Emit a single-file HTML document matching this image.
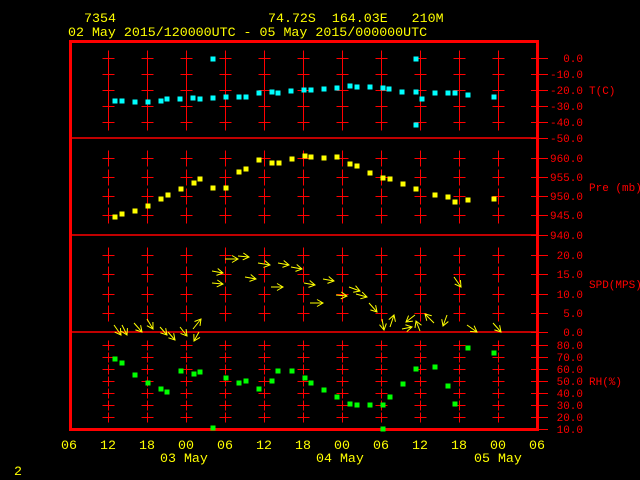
<!DOCTYPE html>
<html><head><meta charset="utf-8"><style>
html,body{margin:0;padding:0;background:#000;}
svg{display:block;}
text{font-family:"Liberation Mono",monospace;font-size:13.3px;white-space:pre;}
.y{fill:#ffff00}.r{fill:#ff0000}
.r text,text.r{font-size:11px;}
</style></head><body>
<svg id="s" width="640" height="480" viewBox="0 0 640 480" xmlns="http://www.w3.org/2000/svg" xml:space="preserve">
<defs><marker id="a" markerWidth="8" markerHeight="8" refX="7" refY="4" orient="auto" markerUnits="userSpaceOnUse"><path d="M1,0.5 L7,4 L1,7.5" fill="none" stroke="#ffff00" stroke-width="1"/></marker></defs>
<g id="grid" stroke="#ff0000" stroke-width="1" fill="none"></g>
<rect x="70.5" y="41.5" width="467" height="388" fill="none" stroke="#ff0000" stroke-width="3"/>
<g stroke="#ff0000" stroke-width="1.5"><line x1="70" y1="138" x2="538" y2="138"/><line x1="70" y1="235" x2="538" y2="235"/><line x1="70" y1="332" x2="538" y2="332"/></g>
<g id="pts"></g>
<g id="arr" stroke="#ffff00" stroke-width="1" marker-end="url(#a)"></g>
<text class="y" x="84" y="22">7354</text>
<text class="y" x="268" y="22">74.72S  164.03E   210M</text>
<text class="y" x="68" y="36">02 May 2015/120000UTC - 05 May 2015/000000UTC</text>
<g class="r" text-anchor="end">
<text x="583" y="62">0.0</text><text x="583" y="78">-10.0</text><text x="583" y="94">-20.0</text><text x="583" y="110">-30.0</text><text x="583" y="126">-40.0</text><text x="583" y="142">-50.0</text>
<text x="583" y="162">960.0</text><text x="583" y="181">955.0</text><text x="583" y="200">950.0</text><text x="583" y="219">945.0</text><text x="583" y="239">940.0</text>
<text x="583" y="259">20.0</text><text x="583" y="278">15.0</text><text x="583" y="298">10.0</text><text x="583" y="317">5.0</text><text x="583" y="336">0.0</text>
<text x="583" y="349">80.0</text><text x="583" y="361">70.0</text><text x="583" y="373">60.0</text><text x="583" y="385">50.0</text><text x="583" y="397">40.0</text><text x="583" y="409">30.0</text><text x="583" y="421">20.0</text><text x="583" y="433">10.0</text>
</g>
<g class="r"><text x="589" y="94">T(C)</text><text x="589" y="191">Pre (mb)</text><text x="589" y="288">SPD(MPS)</text><text x="589" y="385">RH(%)</text></g>
<g class="y" text-anchor="middle">
<text x="69" y="449">06</text><text x="108" y="449">12</text><text x="147" y="449">18</text><text x="186" y="449">00</text><text x="225" y="449">06</text><text x="264" y="449">12</text><text x="303" y="449">18</text><text x="342" y="449">00</text><text x="381" y="449">06</text><text x="420" y="449">12</text><text x="459" y="449">18</text><text x="498" y="449">00</text><text x="537" y="449">06</text>
</g>
<g class="y"><text x="160" y="462">03 May</text><text x="316" y="462">04 May</text><text x="474" y="462">05 May</text></g>
<text class="y" x="14" y="475">2</text>
</svg>
<script>
var NS="http://www.w3.org/2000/svg";
function el(p,t,a){var e=document.createElementNS(NS,t);for(var k in a)e.setAttribute(k,a[k]);document.getElementById(p).appendChild(e);}
var cols=[108,147,186,225,264,303,342,381,420,459,498];
var rows=[[58,74,90,106,122,8],[158,177,196,215,8],[255,274,294,313,8],[345,357,369,381,393,405,417,5]];
var d="";
rows.forEach(function(r){var h=r[r.length-1];for(var i=0;i<r.length-1;i++){var y=r[i]+0.5;cols.forEach(function(x){x+=0.5;d+="M"+x+","+(y-h)+"V"+(y+h)+"M"+(x-6)+","+y+"H"+(x+6);});d+="M531,"+y+"H548";}});
[138,235,332,429].forEach(function(y){d+="M531,"+(y+.5)+"H548";});
el("grid","path",{d:d});
function sq(c,l){l.forEach(function(p){el("pts","rect",{x:p[0]-2.5,y:p[1]-2.5,width:5,height:5,fill:c});});}
sq("#00ffff",[[115,101],[122,101],[135,102],[148,102],[161,101],[167,99],[180,99],[193,98],[200,99],[213,98],[226,97],[239,97],[246,97],[259,93],[272,92],[278,93],[291,91],[304,90],[311,90],[324,89],[337,88],[350,86],[357,87],[370,87],[383,88],[389,89],[402,92],[416,92],[422,99],[435,93],[448,93],[455,93],[468,95],[494,97],[213,59],[416,59],[416,125]]);
sq("#ffff00",[[115,217],[122,214],[135,211],[148,206],[161,199],[168,195],[181,189],[194,183],[200,179],[213,188],[226,188],[239,172],[246,169],[259,160],[272,163],[279,163],[292,159],[305,156],[311,157],[324,158],[337,157],[350,164],[357,166],[370,173],[383,178],[390,179],[403,184],[416,189],[435,195],[448,197],[455,202],[468,200],[494,199]]);
sq("#00ff00",[[115,359],[122,363],[135,375],[148,383],[161,389],[167,392],[181,371],[194,374],[200,372],[213,428],[226,378],[239,383],[246,381],[259,389],[272,381],[278,371],[292,371],[305,378],[311,383],[324,390],[337,397],[350,404],[357,405],[370,405],[383,405],[390,397],[403,384],[416,369],[435,367],[448,386],[455,404],[468,348],[494,353],[383,429]]);
[[225,259,238,259],[238,256,249,257],[212,271,223,273],[212,283,223,284],[245,277,256,279],[258,263,270,265],[271,287,283,287],[278,263,289,265],[291,267,302,269],[304,283,315,285],[323,279,334,281],[310,303,323,303],[336,295,347,296],[349,287,360,291],[356,294,367,297],[369,303,377,312],[454,277,461,287],[382,319,384,330],[390,327,394,315],[415,315,406,322],[402,329,412,327],[420,331,416,321],[434,323,425,314],[447,315,443,326],[467,325,477,332],[493,323,501,332],[114,325,121,335],[122,325,127,335],[134,323,142,332],[147,319,153,329],[160,327,167,335],[168,332,175,340],[180,327,187,336],[193,329,201,319],[199,332,194,341]].forEach(function(a){el("arr","line",{x1:a[0],y1:a[1],x2:a[2],y2:a[3]});});
</script>
</body></html>
